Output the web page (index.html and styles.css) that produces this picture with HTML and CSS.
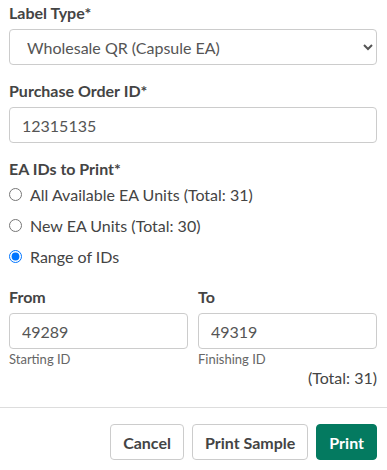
FILE: index.html
```html
<!DOCTYPE html>
<html lang="en">
<head>
  <meta charset="UTF-8">
  <title>Print Labels</title>
  <meta name="viewport" content="width=device-width, initial-scale=1">
  <link rel="stylesheet" href="styles.css">
</head>
<body>
  <form class="print-form">
    <div class="field">
      <label for="labelType">Label Type*</label>
      <select id="labelType">
        <option>Wholesale QR (Capsule EA)</option>
      </select>
    </div>

    <div class="field">
      <label for="poId">Purchase Order ID*</label>
      <input type="text" id="poId" value="12315135">
    </div>

    <div class="field">
      <label class="group-label">EA IDs to Print*</label>
      <div class="radio-list">
        <label class="radio"><input type="radio" name="ids"> All Available EA Units (Total: 31)</label>
        <label class="radio"><input type="radio" name="ids"> New EA Units (Total: 30)</label>
        <label class="radio"><input type="radio" name="ids" checked> Range of IDs</label>
      </div>
    </div>

    <div class="range">
      <div class="range-col">
        <label for="fromId">From</label>
        <input type="text" id="fromId" value="49289">
        <small>Starting ID</small>
      </div>
      <div class="range-col">
        <label for="toId">To</label>
        <input type="text" id="toId" value="49319">
        <small>Finishing ID</small>
      </div>
    </div>
    <div class="total">(Total: 31)</div>
  </form>

  <div class="actions">
    <button type="button" class="btn">Cancel</button>
    <button type="button" class="btn">Print Sample</button>
    <button type="button" class="btn btn-primary">Print</button>
  </div>
</body>
</html>
```

FILE: styles.css
```css
body {
  font-family: Lato, "Open Sans", sans-serif;
  background-color: #fff;
  margin: 0;
  padding: 0;
  color: #444;
}
.print-form {
  padding: 4px 10px 0 9px;
}
.field {
  margin-bottom: 17px;
}
label {
  display: block;
  font-size: 16px;
  font-weight: bold;
  line-height: 18px;
  color: #444;
  margin-bottom: 7px;
}
select,
input[type="text"] {
  display: block;
  width: 100%;
  box-sizing: border-box;
  height: 36px;
  font-family: inherit;
  font-size: 16px;
  color: #555;
  background-color: #fff;
  border: 1px solid #ccc;
  border-radius: 4px;
  padding: 0 12px;
  margin: 0;
}
select {
  padding-left: 13px;
}
.group-label {
  margin-bottom: 1px;
}
.radio-list {
  display: flex;
  flex-direction: column;
}
.radio {
  display: flex;
  align-items: center;
  height: 31px;
  margin: 0;
  font-weight: normal;
}
.radio input {
  width: 13px;
  height: 13px;
  margin: 0 8px 0 0;
}
.range {
  display: grid;
  grid-template-columns: 1fr 1fr;
  gap: 10px;
  margin-top: -1px;
}
.range-col small {
  display: block;
  font-size: 13px;
  line-height: 15px;
  color: #666;
  margin-top: 3px;
}
.total {
  text-align: right;
  font-size: 16px;
  line-height: 18px;
  margin-top: 2px;
}
.actions {
  display: flex;
  justify-content: flex-end;
  gap: 8px;
  margin-top: 20px;
  padding: 16px 10px 0 0;
  border-top: 1px solid #ddd;
}
.btn {
  height: 36px;
  padding: 0 12px;
  font-family: inherit;
  font-size: 16px;
  font-weight: bold;
  color: #444;
  background-color: #fff;
  border: 1px solid #ccc;
  border-radius: 4px;
  cursor: pointer;
}
.btn-primary {
  color: #fff;
  background-color: #047a60;
  border-color: #047a60;
}
```
